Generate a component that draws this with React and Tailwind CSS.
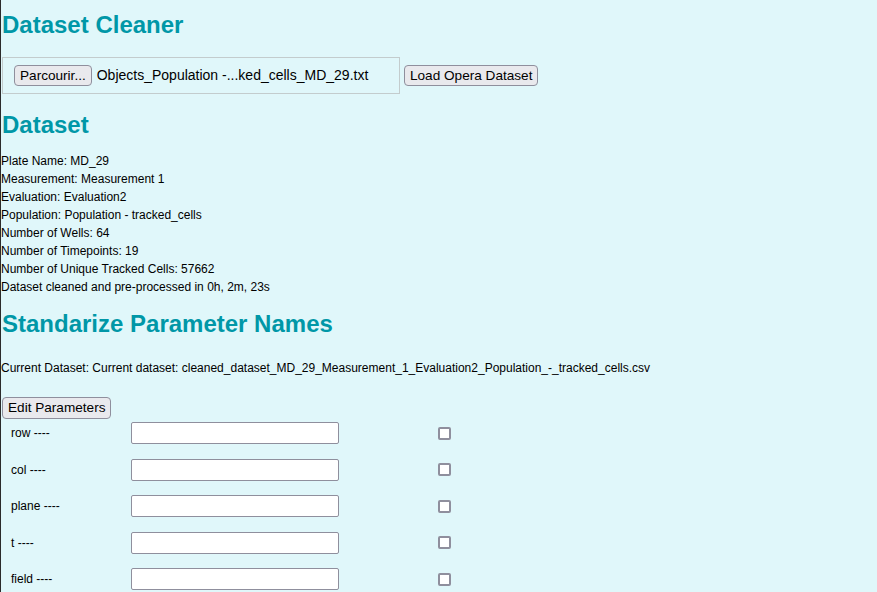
import React from "react";

const params = ["row", "col", "plane", "t", "field"];

export default function App() {
  return (
    <div
      className="min-h-screen w-full bg-[#e0f7fa] border-l border-[#2b2b2b] text-black"
      style={{ fontFamily: '"Liberation Sans", Arial, sans-serif' }}
    >
      <h1 className="pt-[11px] pl-[1px] text-[24px] leading-[28px] font-bold text-[#0097a7]">
        Dataset Cleaner
      </h1>

      <div className="mt-[18px] ml-[1px] flex items-center">
        <div className="flex h-[37px] w-[398px] items-center border border-[#c3cccd] pl-[11px]">
          <button className="h-[21px] rounded-[4px] border border-[#8f8f9d] bg-[#e9e9ed] px-[5px] text-[13.6px] leading-[19px]">
            Parcourir...
          </button>
          <span className="ml-[5px] text-[14px] leading-[19px]">
            Objects_Population -...ked_cells_MD_29.txt
          </span>
        </div>
        <button className="ml-[4px] h-[21px] rounded-[4px] border border-[#8f8f9d] bg-[#e9e9ed] px-[5px] text-[13.6px] leading-[19px]">
          Load Opera Dataset
        </button>
      </div>

      <h2 className="mt-[17px] pl-[1px] text-[24px] leading-[28px] font-bold text-[#0097a7]">
        Dataset
      </h2>

      <div className="mt-[13px] text-[12px] leading-[18px]">
        <div>Plate Name: MD_29</div>
        <div>Measurement: Measurement 1</div>
        <div>Evaluation: Evaluation2</div>
        <div>Population: Population - tracked_cells</div>
        <div>Number of Wells: 64</div>
        <div>Number of Timepoints: 19</div>
        <div>Number of Unique Tracked Cells: 57662</div>
        <div>Dataset cleaned and pre-processed in 0h, 2m, 23s</div>
      </div>

      <h2 className="mt-[14px] pl-[1px] text-[24px] leading-[28px] font-bold text-[#0097a7]">
        Standarize Parameter Names
      </h2>

      <div className="mt-[21px] text-[12px] leading-[18px]">
        Current Dataset: Current dataset: cleaned_dataset_MD_29_Measurement_1_Evaluation2_Population_-_tracked_cells.csv
      </div>

      <button className="mt-[20px] ml-[1px] h-[22px] rounded-[4px] border border-[#8f8f9d] bg-[#e9e9ed] px-[5px] text-[13.6px] leading-[20px]">
        Edit Parameters
      </button>

      <div className="mt-[3px] flex flex-col gap-[14.5px]">
        {params.map((p) => (
          <div key={p} className="flex h-[22px] items-center">
            <span className="w-[130px] pl-[10px] text-[12px] leading-[18px]">
              {p} ----
            </span>
            <input
              type="text"
              className="h-[22px] w-[208px] rounded-[2px] border border-[#8f8f9d] bg-white"
            />
            <span className="ml-[99px] h-[13px] w-[13px] rounded-[2px] border-2 border-[#8f8f9d] bg-white" />
          </div>
        ))}
      </div>
    </div>
  );
}
